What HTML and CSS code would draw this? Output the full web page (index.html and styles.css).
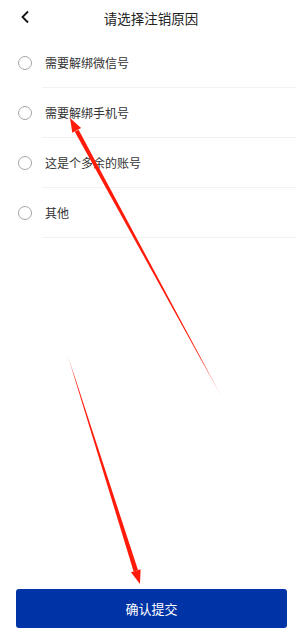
FILE: index.html
```html
<!DOCTYPE html>
<html lang="zh-CN">
<head>
    <meta charset="UTF-8">
    <meta name="viewport" content="width=device-width, initial-scale=1.0">
    <title>注销原因</title>
    <link rel="stylesheet" href="styles.css">
</head>
<body>
    <div class="page">
        <div class="header">
            <span class="back">
                <svg width="10" height="14" viewBox="0 0 10 14"><path d="M8 1.5 L2.5 7 L8 12.5" fill="none" stroke="#111" stroke-width="1.8"/></svg>
            </span>
            <span class="title">请选择注销原因</span>
        </div>

        <div class="reasons">
            <div class="reason"><span class="radio"></span><span class="label">需要解绑微信号</span></div>
            <div class="reason"><span class="radio"></span><span class="label">需要解绑手机号</span></div>
            <div class="reason"><span class="radio"></span><span class="label">这是个多余的账号</span></div>
            <div class="reason"><span class="radio"></span><span class="label">其他</span></div>
        </div>

        <div class="footer">
            <button class="submit">确认提交</button>
        </div>

        <!-- annotation arrows -->
        <svg class="marks" width="296" height="642" viewBox="0 0 296 642">
            <defs>
                <linearGradient id="fade1" x1="225" y1="403" x2="70" y2="118" gradientUnits="userSpaceOnUse">
                    <stop offset="0" stop-color="#ff1a0a" stop-opacity="0"/>
                    <stop offset="0.15" stop-color="#ff1a0a" stop-opacity="1"/>
                </linearGradient>
                <linearGradient id="fade2" x1="66" y1="350" x2="140" y2="584" gradientUnits="userSpaceOnUse">
                    <stop offset="0" stop-color="#ff1a0a" stop-opacity="0"/>
                    <stop offset="0.12" stop-color="#ff1a0a" stop-opacity="1"/>
                </linearGradient>
            </defs>
            <polygon points="225,403 78.6,129.7 74.8,131.7" fill="url(#fade1)"/>
            <polygon points="70,118 81.1,127.9 72.3,132.7" fill="#ff1a0a"/>
            <polygon points="66,350 138,570 133.6,571.4" fill="url(#fade2)"/>
            <polygon points="140,584 140.6,569.2 131,572.2" fill="#ff1a0a"/>
        </svg>
    </div>
</body>
</html>
```

FILE: styles.css
```css
* {
    box-sizing: border-box;
}
body {
    margin: 0;
    background: #fff;
    font-family: "Noto Sans CJK SC", "Noto Sans", sans-serif;
    color: #333;
}
.page {
    position: relative;
    height: 642px;
    display: flex;
    flex-direction: column;
}
.header {
    position: relative;
    height: 37px;
    display: flex;
    align-items: center;
    justify-content: center;
}
.back {
    position: absolute;
    left: 20px;
    top: 10px;
    display: flex;
}
.title {
    font-size: 13.5px;
    color: #222;
    margin-left: 6px;
    margin-top: -1px;
}
.reasons {
    flex: 1;
    padding-top: 1px;
}
.reason {
    display: flex;
    align-items: center;
    height: 50px;
}
.radio {
    width: 14px;
    height: 14px;
    margin-left: 18px;
    margin-right: 10px;
    border: 1.5px solid #a6a6a6;
    border-radius: 50%;
    flex-shrink: 0;
}
.label {
    flex: 1;
    height: 50px;
    line-height: 50px;
    padding-left: 3px;
    font-size: 12px;
    color: #333;
    border-bottom: 1px solid #f2f2f2;
}
.footer {
    padding: 0 9px 14px 16px;
}
.submit {
    display: block;
    width: 100%;
    height: 39px;
    border: none;
    border-radius: 3px;
    background: #0033a6;
    color: #fff;
    font-family: inherit;
    font-size: 13px;
}
.marks {
    position: absolute;
    left: 0;
    top: 0;
    pointer-events: none;
}
```
